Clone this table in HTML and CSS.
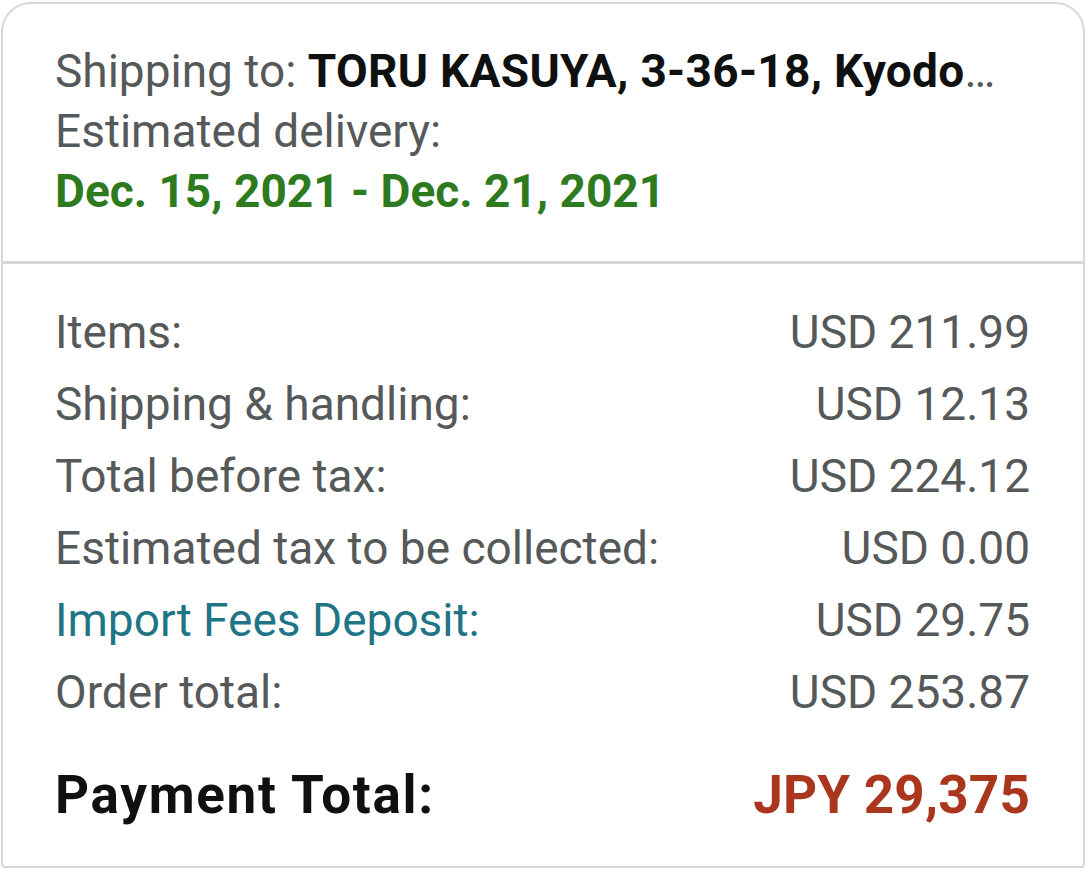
FILE: index.html
```html
<!DOCTYPE html>
<html lang="en">
<head>
<meta charset="utf-8">
<title>Order summary</title>
<link rel="stylesheet" href="styles.css">
</head>
<body>
<div class="card">
  <section class="ship">
    <div class="ship-line"><span class="muted">Shipping to: </span><b class="addr">TORU KASUYA, 3-36-18, Kyodo, Setagaya-ku, Tokyo, 156-0052, Japan</b></div>
    <div class="muted">Estimated delivery:</div>
    <div class="eta">Dec. 15, 2021 - Dec. 21, 2021</div>
  </section>
  <section class="summary">
    <div class="row"><span>Items:</span><span>USD 211.99</span></div>
    <div class="row"><span>Shipping &amp; handling:</span><span>USD 12.13</span></div>
    <div class="row"><span>Total before tax:</span><span>USD 224.12</span></div>
    <div class="row"><span>Estimated tax to be collected:</span><span>USD 0.00</span></div>
    <div class="row"><a class="link" href="#">Import Fees Deposit:</a><span>USD 29.75</span></div>
    <div class="row"><span>Order total:</span><span>USD 253.87</span></div>
    <div class="row total"><span class="total-label">Payment Total:</span><span class="price">JPY 29,375</span></div>
  </section>
</div>
</body>
</html>
```
FILE: styles.css
```css
html, body {
  margin: 0;
  padding: 0;
  background: #ffffff;
}
body {
  font-family: Roboto, "Liberation Sans", sans-serif;
  font-size: 46px;
  color: #565959;
}
.card {
  margin: 2px 1px 0 1px;
  border: 2px solid #d5d9d9;
  border-radius: 30px 30px 4px 4px;
  background: #fff;
}
.ship {
  padding: 37px 53px 40px 52px;
  line-height: 60px;
  border-bottom: 3px solid #d5d9d9;
}
.ship-line {
  white-space: nowrap;
  overflow: hidden;
  text-overflow: ellipsis;
  padding-right: 31px;
}
.muted { color: #565959; }
.addr {
  color: #0f1111;
  font-weight: 700;
  letter-spacing: 0.3px;
}
.eta {
  color: #2d7a1f;
  font-weight: 700;
}
.summary {
  padding: 32px 53px 35px 52px;
}
.row {
  display: flex;
  justify-content: space-between;
  line-height: 72px;
}
.link {
  color: #1f7585;
  text-decoration: none;
}
.total {
  margin-top: 31px;
  font-size: 53px;
  font-weight: 700;
  color: #0f1111;
}
.total-label {
  letter-spacing: 1.7px;
}
.price {
  color: #a9361d;
  letter-spacing: 0.2px;
}
```
